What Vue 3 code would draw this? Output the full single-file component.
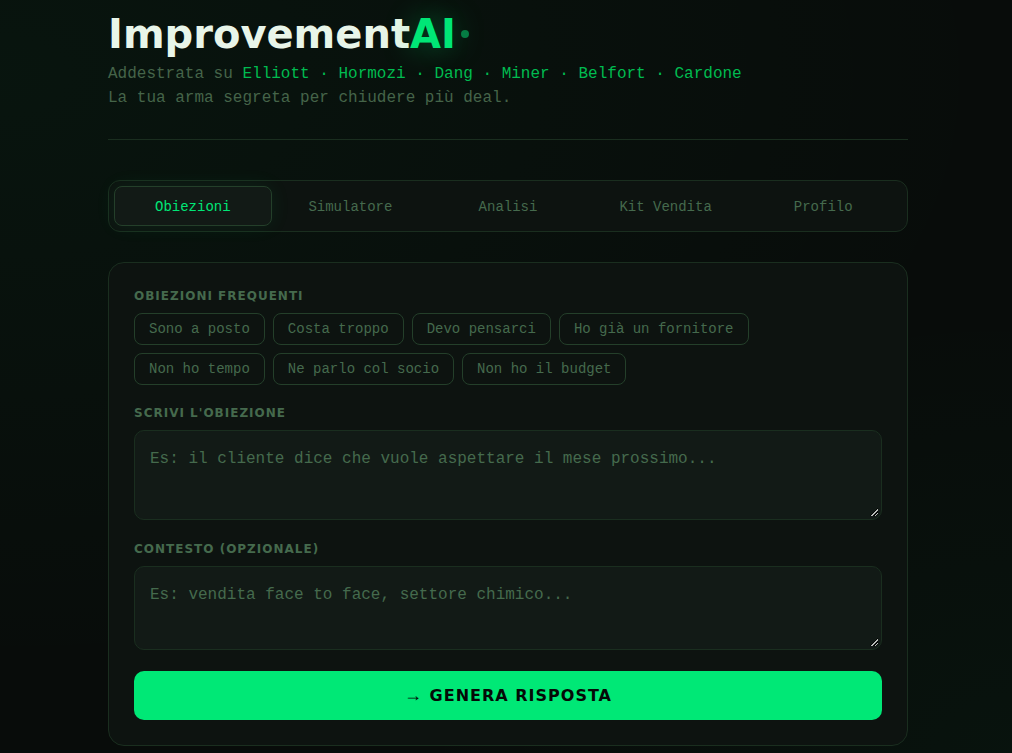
<script setup>
import { ref } from 'vue'

const tabs = ['Obiezioni', 'Simulatore', 'Analisi', 'Kit Vendita', 'Profilo']
const activeTab = ref('Obiezioni')
const frequent = [
  'Sono a posto',
  'Costa troppo',
  'Devo pensarci',
  'Ho già un fornitore',
  'Non ho tempo',
  'Ne parlo col socio',
  'Non ho il budget',
]
const objection = ref('')
const context = ref('')
</script>

<template>
  <div class="page">
    <main class="container">
      <header class="header">
        <h1 class="brand">Improvement<span class="brand-ai">AI</span><i class="dot"></i></h1>
        <p class="tagline">
          Addestrata su <strong>Elliott · Hormozi · Dang · Miner · Belfort · Cardone</strong><br />
          La tua arma segreta per chiudere più deal.
        </p>
      </header>

      <nav class="tabs">
        <button
          v-for="tab in tabs"
          :key="tab"
          type="button"
          class="tab"
          :class="{ active: tab === activeTab }"
          @click="activeTab = tab"
        >{{ tab }}</button>
      </nav>

      <section class="card">
        <h2 class="label">OBIEZIONI FREQUENTI</h2>
        <div class="chips">
          <button
            v-for="item in frequent"
            :key="item"
            type="button"
            class="chip"
            @click="objection = item"
          >{{ item }}</button>
        </div>

        <label class="label" for="objection">SCRIVI L'OBIEZIONE</label>
        <textarea
          id="objection"
          v-model="objection"
          class="field field-main"
          placeholder="Es: il cliente dice che vuole aspettare il mese prossimo..."
        ></textarea>

        <label class="label" for="context">CONTESTO (OPZIONALE)</label>
        <textarea
          id="context"
          v-model="context"
          class="field field-context"
          placeholder="Es: vendita face to face, settore chimico..."
        ></textarea>

        <button type="button" class="submit"><span class="arrow">→</span> GENERA RISPOSTA</button>
      </section>
    </main>
  </div>
</template>

<style>
body {
  background: #080c0a;
}
</style>

<style scoped>
.page {
  box-sizing: border-box;
  min-height: 100vh;
  padding: 13px 0 7px 4px;
  background:
    radial-gradient(ellipse 100% 80% at 0% 10%, rgba(0, 230, 118, 0.04), transparent 100%),
    radial-gradient(ellipse 60% 60% at 100% 100%, rgba(0, 230, 118, 0.03), transparent 100%),
    #080c0a;
  color: #e8f5e9;
  font-family: "Liberation Mono", "DejaVu Sans Mono", monospace;
}
.container {
  max-width: 800px;
  margin: 0 auto;
}
.header {
  padding-bottom: 29px;
  border-bottom: 1px solid #1a2e1f;
  margin-bottom: 40px;
}
.brand {
  display: flex;
  align-items: center;
  margin: 0 0 7px;
  height: 42px;
  font: 700 40px/40px "DejaVu Sans", sans-serif;
}
.brand-ai {
  color: #00e676;
  text-shadow: 0 0 30px rgba(0, 230, 118, 0.4);
}
.dot {
  width: 8px;
  height: 8px;
  margin-left: 5px;
  border-radius: 50%;
  background: #057c43;
}
.tagline {
  margin: 0;
  color: #456449;
  font-size: 16px;
  line-height: 24px;
}
.tagline strong {
  color: #00bb50;
  font-weight: 400;
}
.tabs {
  display: grid;
  grid-template-columns: repeat(5, 1fr);
  padding: 5px;
  margin-bottom: 30px;
  border: 1px solid #1a2e1f;
  border-radius: 12px;
  background: #0d1310;
}
.tab {
  height: 40px;
  padding: 2px 0 0;
  border: 1px solid transparent;
  border-radius: 8px;
  background: transparent;
  color: #456a4d;
  font: 400 14px/20px "Liberation Mono", monospace;
  cursor: pointer;
}
.tab.active {
  border-color: #243f2a;
  background: #121a16;
  color: #00e676;
  box-shadow: 0 0 20px rgba(0, 230, 118, 0.08);
}
.card {
  padding: 25px;
  border: 1px solid #1a2e1f;
  border-radius: 16px;
  background: #0d1310;
}
.label {
  display: block;
  margin: 0 0 9px;
  color: #456a4d;
  font: 700 12px/16px "DejaVu Sans", sans-serif;
  letter-spacing: 1px;
}
.chips {
  display: flex;
  flex-wrap: wrap;
  gap: 8px;
  margin-bottom: 20px;
}
.chip {
  height: 32px;
  padding: 0 14px;
  border: 1px solid #243f2a;
  border-radius: 8px;
  background: transparent;
  color: #456a4d;
  font: 400 14px/20px "Liberation Mono", monospace;
  cursor: pointer;
}
.field {
  display: block;
  box-sizing: border-box;
  width: 100%;
  margin: 0 0 21px;
  padding: 15px;
  border: 1px solid #1a2e1f;
  border-radius: 10px;
  outline: none;
  background: #121a16;
  color: #e8f5e9;
  font: 400 16px/27px "Liberation Mono", monospace;
  resize: vertical;
}
.field::placeholder {
  color: #456a4d;
}
.field::-webkit-resizer {
  background: linear-gradient(
    135deg,
    transparent 0 48%,
    #050705 48% 56%,
    #b8bcb8 56% 66%,
    #050705 66% 76%,
    #b8bcb8 76% 82%,
    transparent 82%
  ) center / 8px 8px no-repeat;
}
.field-main {
  height: 90px;
}
.field-context {
  height: 84px;
}
.submit {
  display: block;
  width: 100%;
  height: 49px;
  border: 0;
  border-radius: 10px;
  background: #00e876;
  color: #050a07;
  font: 700 16px/24px "DejaVu Sans", sans-serif;
  letter-spacing: 1px;
  cursor: pointer;
}
.arrow {
  font-family: "Liberation Serif", serif;
  font-size: 18px;
  font-weight: 400;
}
</style>
